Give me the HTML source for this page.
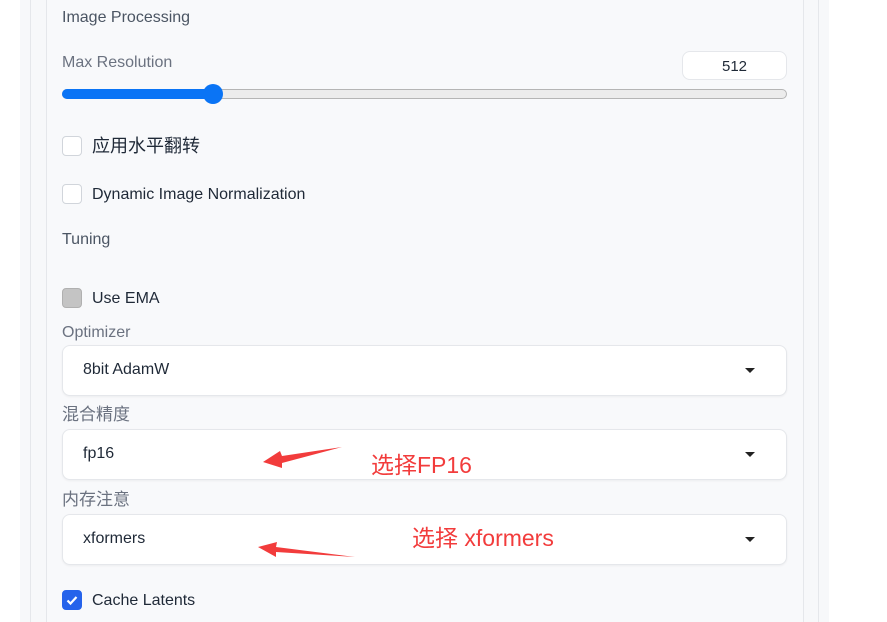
<!DOCTYPE html>
<html><head><style>
body{margin:0;width:887px;height:622px;background:#fff;position:relative;overflow:hidden;font-family:"Liberation Sans","Noto Sans CJK SC",sans-serif;}
.a{position:absolute;}
.t{position:absolute;font-size:16px;color:#374151;line-height:20px;white-space:nowrap;}
.lbl{color:#6b7280;}
.cb{position:absolute;left:62px;width:18px;height:18px;border:1px solid #d1d5db;border-radius:4px;background:#fff;}
.box{position:absolute;left:62px;width:723px;height:49px;background:#fff;border:1px solid #e5e7eb;border-radius:8px;box-shadow:0 1px 2px rgba(0,0,0,0.05);}
.box span{position:absolute;left:20px;top:15px;font-size:16px;color:#1f2937;}
.arr{position:absolute;left:682px;top:22px;width:0;height:0;border-left:5px solid transparent;border-right:5px solid transparent;border-top:5px solid #222;}
.red{position:absolute;color:#f23c3c;font-size:23px;white-space:nowrap;}
</style></head><body>
<div class="a" style="left:20px;top:0;width:809px;height:622px;background:#f7f8fa;"></div>
<div class="a" style="left:30px;top:0;width:1px;height:622px;background:#e5e7eb;"></div>
<div class="a" style="left:46px;top:0;width:756px;height:622px;background:#f8f9fb;border-left:1px solid #e5e7eb;border-right:1px solid #e5e7eb;"></div>
<div class="a" style="left:818px;top:0;width:1px;height:622px;background:#e5e7eb;"></div>

<div class="t" style="left:62px;top:8px;color:#4b5563;">Image Processing</div>
<div class="t lbl" style="left:62px;top:53px;">Max Resolution</div>
<div class="a" style="left:682px;top:51px;width:103px;height:27px;background:#fff;border:1px solid #e5e7eb;border-radius:8px;text-align:center;font-size:15px;line-height:29px;color:#1f2937;">512</div>
<div class="a" style="left:62px;top:89px;width:723px;height:8px;background:#ececec;border:1px solid #b5b5b5;border-radius:5px;"></div>
<div class="a" style="left:62px;top:89px;width:150px;height:10px;background:#0a74f5;border-radius:5px;"></div>
<div class="a" style="left:203px;top:84px;width:20px;height:20px;background:#0a74f5;border-radius:50%;"></div>

<div class="cb" style="top:136px;"></div>
<div class="t" style="left:92px;top:136px;font-size:18px;color:#1f2937;">应用水平翻转</div>
<div class="cb" style="top:184px;"></div>
<div class="t" style="left:92px;top:185px;color:#1f2937;">Dynamic Image Normalization</div>
<div class="t" style="left:62px;top:230px;color:#4b5563;">Tuning</div>
<div class="cb" style="top:288px;background:#c4c4c4;border-color:#b0b0b0;"></div>
<div class="t" style="left:92px;top:289px;color:#1f2937;">Use EMA</div>

<div class="t lbl" style="left:62px;top:323px;">Optimizer</div>
<div class="box" style="top:345px;"><span>8bit AdamW</span><div class="arr"></div></div>
<div class="t lbl" style="left:62px;top:405px;font-size:17px;">混合精度</div>
<div class="box" style="top:429px;"><span>fp16</span><div class="arr"></div></div>
<div class="t lbl" style="left:62px;top:490px;font-size:17px;">内存注意</div>
<div class="box" style="top:514px;"><span>xformers</span><div class="arr"></div></div>

<div class="cb" style="top:590px;background:#2563eb;border-color:#2563eb;"><svg width="18" height="18" viewBox="0 0 18 18" style="position:absolute;left:0;top:0"><path d="M4.5 9.5l3 3 6-6.5" stroke="#fff" stroke-width="2.2" fill="none"/></svg></div>
<div class="t" style="left:92px;top:591px;color:#1f2937;">Cache Latents</div>

<svg class="a" style="left:0;top:0" width="887" height="622">
<polygon points="342,447 282,456 280,451 263,462 282,468 282,463" fill="#f23c3c"/>
<polygon points="355,557 276,547 277,542 258,547 276,557 276,552" fill="#f23c3c"/>
</svg>
<div class="red" style="left:371px;top:446px;">选择FP16</div>
<div class="red" style="left:412px;top:519px;">选择 xformers</div>
</body></html>
